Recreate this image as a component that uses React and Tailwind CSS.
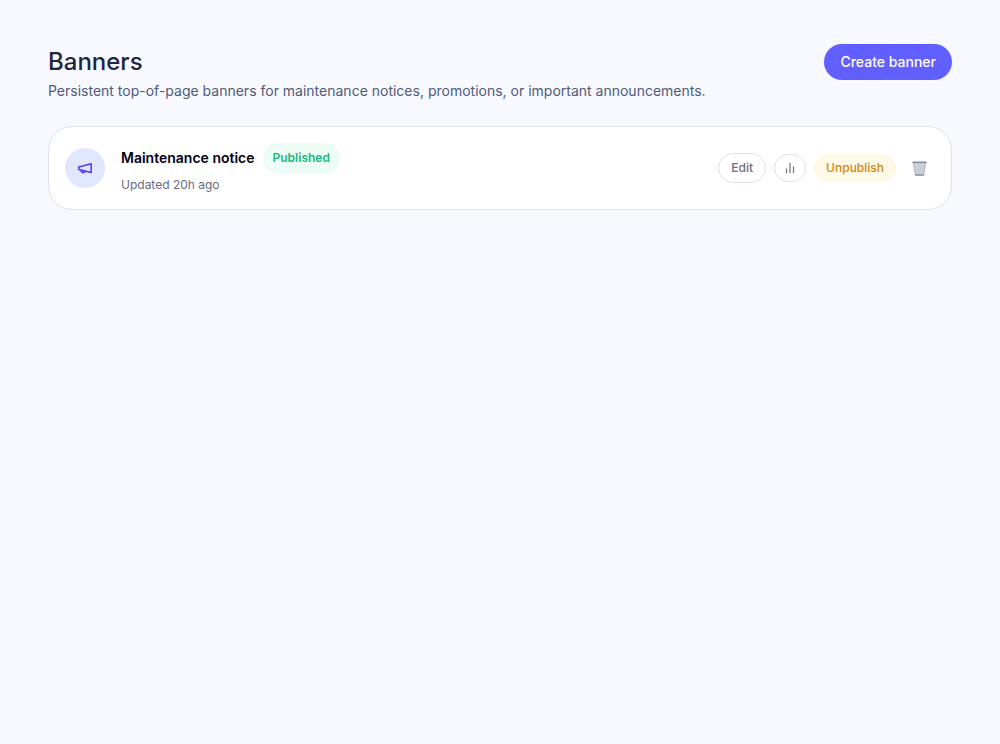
const banners = [
  { id: 1, title: "Maintenance notice", status: "Published", updated: "Updated 20h ago" },
];

function MegaphoneIcon() {
  return (
    <svg className="size-4" viewBox="0 0 16 16" fill="none" stroke="currentColor" strokeWidth="1.5" strokeLinecap="round" strokeLinejoin="round">
      <path d="M1.7 7 14.2 3.7v8.8L1.7 9.4z" />
      <path d="M4.2 10.2c-.2 2.6 3.6 3.2 4.3.9" />
    </svg>
  );
}

function ChartIcon() {
  return (
    <svg className="size-3.5" viewBox="0 0 24 24" fill="none" stroke="currentColor" strokeWidth="2" strokeLinecap="round">
      <path d="M18 20V10M12 20V4M6 20v-6" />
    </svg>
  );
}

function TrashIcon() {
  return (
    <svg className="size-[15px]" viewBox="0 0 16 16">
      <path d="M1.5 2h13l-1.7 13H3.2z" fill="#d3d6dc" />
      <path d="M2 3.5 12.5 14M5.5 3 13 10.5M9.5 3 14 7M2.5 8l6 6.5M14 3.5 3.5 14M10.5 3 3 10.5M6.5 3 2 7M13.5 8l-6 6.5" stroke="#bbc1ca" strokeWidth=".7" />
      <path d="M1.5 2.5 3.3 14.5M14.5 2.5l-1.8 12" stroke="#a5afb9" strokeWidth=".8" />
      <path d="M.4.6h15.2v1.7H.4z" fill="#7d8b97" />
      <path d="M3.2 14h9.6l-.2 1.6H3.4z" fill="#8492a0" />
    </svg>
  );
}

function BannerRow({ banner }) {
  return (
    <li className="flex items-center gap-4 rounded-3xl border border-[#dee1ec] bg-white p-4">
      <div className="flex size-10 shrink-0 items-center justify-center rounded-full bg-indigo-100 text-indigo-600">
        <MegaphoneIcon />
      </div>

      <div className="min-w-0 flex-1">
        <div className="flex items-center gap-2">
          <h2 className="text-sm font-semibold text-[#030014]">{banner.title}</h2>
          <span className="rounded-full bg-[#ecfdf5] px-2.5 py-[7px] text-xs font-semibold text-[#17b97f]">
            {banner.status}
          </span>
        </div>
        <p className="mt-1 text-xs text-[#6b6b80]">{banner.updated}</p>
      </div>

      <div className="flex items-center gap-2">
        <button type="button" className="rounded-full border border-[#dfdfea] px-3 py-1.5 text-xs font-medium text-[#6b6b80]">
          Edit
        </button>
        <button type="button" aria-label="Analytics" className="flex h-7 w-8 items-center justify-center rounded-full border border-[#dfdfea] text-[#6b6b80]">
          <ChartIcon />
        </button>
        <button type="button" className="rounded-full bg-[#fef8e6] px-3 py-1.5 text-xs font-medium text-[#d48806]">
          Unpublish
        </button>
        <button type="button" aria-label="Delete" className="px-2 py-1.5">
          <TrashIcon />
        </button>
      </div>
    </li>
  );
}

export default function App() {
  return (
    <main className="min-h-screen bg-[#f8f9ff] px-12 py-11 font-['Inter',sans-serif]">
      <header className="mb-6 flex items-start justify-between gap-4">
        <div>
          <h1 className="text-2xl leading-9 font-medium text-[#1f2440]">Banners</h1>
          <p className="text-sm leading-[22px] text-[#4f5b7a]">
            Persistent top-of-page banners for maintenance notices, promotions, or important announcements.
          </p>
        </div>
        <button type="button" className="rounded-full bg-[#615fff] px-4 py-2 text-sm font-medium text-white">
          Create banner
        </button>
      </header>

      <ul>
        {banners.map((banner) => (
          <BannerRow key={banner.id} banner={banner} />
        ))}
      </ul>
    </main>
  );
}
